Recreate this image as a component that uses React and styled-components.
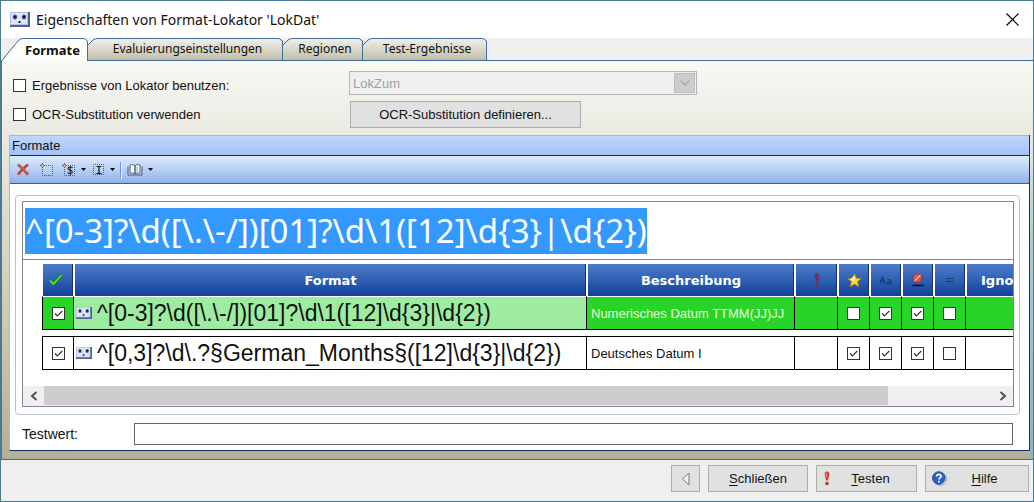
import React, { useState } from 'react';
import styled, { createGlobalStyle, css } from 'styled-components';

const GlobalStyle = createGlobalStyle`
  * {
    box-sizing: border-box;
  }

  body {
    margin: 0;
    font-family: 'Liberation Sans', Arial, sans-serif;
    font-size: 13px;
    color: #111;
  }

  button, input, select {
    font: inherit;
    color: inherit;
  }
`;

const Dialog = styled.div`
  display: flex;
  flex-direction: column;
  min-height: 100vh;
  background: #efefef;
  border: 1px solid #4a7b93;
`;

const TitleBar = styled.header`
  display: flex;
  align-items: center;
  gap: 6px;
  height: 37px;
  padding: 0 14px 0 9px;
  background: #fff;
`;

const Title = styled.h1`
  flex: 1;
  margin: 0;
  font-family: 'Noto Sans', sans-serif;
  font-size: 14px;
  font-weight: 400;
`;

const CloseButton = styled.button`
  display: flex;
  padding: 0;
  border: none;
  background: none;
`;

const TabBar = styled.div`
  display: flex;
  height: 23px;
  border-bottom: 1px solid #3f6b9c;
`;

const TabButton = styled.button`
  position: relative;
  width: ${(p) => p.$width}px;
  height: ${(p) => (p.$active ? 23 : 22)}px;
  padding: 0 0 0 ${(p) => (p.$active ? 16 : 4)}px;
  border: none;
  background: none;
  font-family: 'Noto Sans', sans-serif;
  font-size: ${(p) => (p.$active ? 13 : 12)}px;
  font-weight: ${(p) => (p.$active ? 700 : 400)};
  line-height: 22px;
  white-space: nowrap;
`;

const TabShape = styled.svg`
  position: absolute;
  inset: 0;
  width: 100%;
  height: 100%;
`;

const TabLabel = styled.span`
  position: relative;
`;

const Page = styled.main`
  flex: 1;
  display: flex;
  flex-direction: column;
  padding: 10px 3px 8px 7px;
  border-left: 1px solid #3c78b4;
  border-bottom: 1px solid #3c6f9c;
  background:
    linear-gradient(transparent 20%, #a5c8c8 55%, #8fb3b3) right / 3px 100% no-repeat,
    linear-gradient(#f9f8f3, #e9e8e0 20%, #d3d0bf 55%, #b3af9a);
`;

const Options = styled.div`
  display: grid;
  grid-template-columns: 336px 1fr;
  grid-template-rows: 28px 27px;
  row-gap: 2px;
  align-items: center;
  padding: 0 0 7px 4px;
`;

const CheckLabel = styled.label`
  display: flex;
  align-items: center;
  gap: 6px;
`;

const CheckBox = styled.input`
  appearance: none;
  flex: none;
  display: block;
  width: 13px;
  height: 13px;
  margin: 0;
  border: 1px solid #333;
  background: #fff;

  &:checked {
    background: #fff url("data:image/svg+xml,%3Csvg xmlns='http://www.w3.org/2000/svg' viewBox='0 0 11 11'%3E%3Cpath d='M2 5.5 4.3 8 9.3 3' fill='none' stroke='%23333' stroke-width='1.2'/%3E%3C/svg%3E");
  }
`;

const SelectBox = styled.div`
  display: grid;
  align-items: center;
  align-self: start;
  width: 348px;
  height: 24px;
  border: 1px solid #b4b4b4;
  background: #efefef;
`;

const Select = styled.select`
  grid-area: 1 / 1;
  appearance: none;
  height: 22px;
  padding: 0 3px;
  border: none;
  background: none;
  color: #a0a0a0;
  opacity: 1;
`;

const SelectArrow = styled.span`
  grid-area: 1 / 1;
  justify-self: end;
  display: flex;
  align-items: center;
  justify-content: center;
  width: 21px;
  height: 20px;
  margin-right: 1px;
  border: 1px solid #bdbdbd;
  background: #ccc;
  pointer-events: none;
`;

const Button = styled.button`
  display: flex;
  align-items: center;
  justify-content: center;
  width: ${(p) => p.$width}px;
  height: 27px;
  padding: 0 6px;
  border: 1px solid #adadad;
  background: #e1e1e1;
`;

const ButtonText = styled.span`
  flex: 1;
  text-align: center;

  &::first-letter {
    text-decoration: underline;
    text-underline-offset: 2px;
  }
`;

const DefineButton = styled(Button)`
  margin-left: 1px;
`;

const Group = styled.section`
  flex: 1;
  display: flex;
  flex-direction: column;
  min-width: 0;
  border-left: 1px solid #a9bccb;
  border-right: 1px solid #14306a;
  border-bottom: 1px solid #14306a;
  background: #fff;
`;

const GroupTitle = styled.h2`
  height: 21px;
  margin: 0;
  padding: 0 2px;
  border-top: 1px solid #a3b8cc;
  border-bottom: 1px solid #0a2f7c;
  background: linear-gradient(#c0d6fd, #a3c0f7);
  font-size: 13px;
  font-weight: 400;
  line-height: 19px;
`;

const Toolbar = styled.div`
  display: flex;
  align-items: center;
  height: 28px;
  padding: 0 6px;
  border-bottom: 1px solid #3a5c9c;
  background: linear-gradient(#dcebfe, #b9d0f5 50%, #8fb0e8);
`;

const ToolButton = styled.button`
  display: flex;
  align-items: center;
  gap: 5px;
  width: ${(p) => p.$width}px;
  padding: 0;
  border: none;
  background: none;
`;

const Separator = styled.span`
  width: 1px;
  height: 16px;
  margin: 0 6px 0 3px;
  background: #6f93c9;
  box-shadow: 1px 1px 0 #e7f0fd;
`;

const Frame = styled.div`
  display: flex;
  flex-direction: column;
  flex: 1;
  margin: 11px 9px 0 5px;
  padding: 5px 5px 7px 6px;
  border: 1px solid #b5c3cf;
  border-radius: 4px;
  min-width: 0;
`;

const Panel = styled.div`
  flex: 1;
  display: flex;
  flex-direction: column;
  min-width: 0;
  border: 1px solid #85858d;
`;

const ExpressionRow = styled.div`
  padding: 6px 2px 5px;
  border-bottom: 1px solid #85858d;
`;

const Expression = styled.mark`
  display: inline-block;
  vertical-align: top;
  background: #3399ff;
  color: #fff;
  font-family: 'Noto Sans', sans-serif;
  font-size: 33px;
  line-height: 46px;
  white-space: nowrap;
`;

const TableArea = styled.div`
  flex: 1;
  overflow: hidden;
  padding: 4px 0 0 19px;
`;

const Table = styled.table`
  table-layout: fixed;
  width: 100%;
  border-collapse: separate;
  border-spacing: 0;
`;

const Head = styled.th`
  width: ${(p) => (p.$width ? `${p.$width}px` : 'auto')};
  height: 32px;
  padding: 0;
  border-left: 1px solid #fff;
  border-right: 1px solid #fff;
  background: linear-gradient(#4c7bcb, #2f60b3 50%, #12409a);
  box-shadow: inset -1px 0 0 #12306e;
  color: #fff;
  font-family: 'DejaVu Sans', sans-serif;
  font-size: 13px;
  font-weight: 700;

  &:last-child {
    padding-left: 14px;
    border-right: none;
    box-shadow: none;
    text-align: left;
  }

  svg {
    display: block;
    margin: 0 auto;
  }
`;

const RowGroup = styled.tbody`
  & + &::before {
    content: '';
    display: table-row;
    height: 6px;
  }
`;

const cellFill = css`
  background: ${(p) => (p.$selected ? '#27d427' : '#fff')};
  color: ${(p) => (p.$selected ? '#eafcd8' : '#111')};
`;

const Cell = styled.td`
  height: 34px;
  padding: 0 4px;
  border-top: 1px solid ${(p) => (p.$selected ? '#fff' : '#000')};
  border-right: 1px solid #000;
  border-bottom: 1px solid #000;
  font-size: 13px;
  white-space: nowrap;
  ${cellFill}

  &:first-child {
    border-left: 1px solid #000;
  }

  &:last-child {
    border-right: none;
  }

  ${CheckBox} {
    margin: 0 auto;
  }
`;

const FormatCell = styled(Cell)`
  padding: 0 2px;
  background: ${(p) => (p.$selected ? '#9eeca2' : '#fff')};
  color: #111;
  font-size: 23px;
`;

const FormatText = styled.div`
  display: flex;
  align-items: center;
  gap: 5px;
`;

const ScrollBar = styled.div`
  display: flex;
  height: 20px;
  background: #f0f0f0;
`;

const ScrollButton = styled.button`
  display: flex;
  align-items: center;
  justify-content: center;
  width: 21px;
  padding: 0;
  border: none;
  background: none;
`;

const ScrollTrack = styled.div`
  flex: 1;
`;

const ScrollThumb = styled.div`
  width: 89%;
  height: 19px;
  background: #cdcdcd;
`;

const TestRow = styled.div`
  display: grid;
  grid-template-columns: 112px 1fr;
  align-items: center;
  padding: 8px 16px 5px 12px;
  font-size: 14px;
`;

const TestInput = styled.input`
  width: 100%;
  height: 22px;
  padding: 0 4px;
  border: 1px solid #646464;
  background: #fff;
`;

const Footer = styled.footer`
  display: flex;
  justify-content: flex-end;
  gap: 8px;
  padding: 5px 4px 9px;
`;

const FormatIcon = ({ width = 16, height = 12 }) => (
  <svg width={width} height={height} viewBox="0 0 20 15" aria-hidden="true">
    <rect width="20" height="15" fill="#4f5f90" />
    <rect width="18" height="13" fill="#b4c3e2" />
    <rect x="1" y="1" width="16" height="11" fill="#dfe7f7" />
    <path
      d="M5 2.500v5M3 3.800l4 2.400M7 3.800l-4 2.400M14 2.500v5M12 3.800l4 2.400M16 3.800l-4 2.400"
      stroke="#0b1450"
      strokeWidth="1.200"
    />
    <rect x="8.500" y="9" width="2" height="2" fill="#0b1450" />
  </svg>
);

const Caret = () => (
  <svg width="5" height="3" viewBox="0 0 5 3" aria-hidden="true">
    <path d="M0 0h5L2.500 3z" fill="#000" />
  </svg>
);

const Sparkle = () => (
  <>
    <path d="M2.500 0v5M0 2.500h5" stroke="#7b5a20" />
    <rect x="1" y="1" width="3" height="3" fill="#b8863a" />
    <rect x="2" y="2" width="1" height="1" fill="#ffe9a0" />
  </>
);

const DottedBox = ({ x, y, size }) => (
  <rect
    x={x + 0.5}
    y={y + 0.5}
    width={size}
    height={size}
    fill="none"
    stroke="#4c5870"
    strokeDasharray="1 1"
    strokeDashoffset=".5"
  />
);

const DeleteIcon = () => (
  <svg width="14" height="13" viewBox="0 0 14 13" aria-hidden="true">
    <path d="M2 1.500c3 2.500 6 5.500 10 10M12 1.500C8 4.500 4.500 8 2 11.500" fill="none" stroke="#b8463c" strokeWidth="2.800" />
    <path d="M2.500 1.500C5 4 8 6.500 11 10" fill="none" stroke="#dc8074" />
  </svg>
);

const NewIcon = () => (
  <svg width="14" height="14" viewBox="0 0 14 14" aria-hidden="true">
    <DottedBox x={2} y={2} size={10} />
    <Sparkle />
  </svg>
);

const NewVariableIcon = () => (
  <svg width="14" height="14" viewBox="0 0 14 14" aria-hidden="true">
    <DottedBox x={2} y={2} size={10} />
    <path
      d="M10.500 4.800C9.500 3.600 6 3.700 6 5.500c0 1.900 4.300 1.300 4.300 3.400 0 2-3.500 2-4.600.6M8.200 3v9.500"
      fill="none"
      stroke="#222"
      strokeWidth="1.100"
    />
    <Sparkle />
  </svg>
);

const InsertIcon = () => (
  <svg width="12" height="12" viewBox="0 0 12 12" aria-hidden="true">
    <DottedBox x={0} y={0} size={10} />
    <path d="M3.500 2.500h5M3.500 9.500h5M6 2.500v7" stroke="#111" strokeWidth="1.200" />
  </svg>
);

const BookIcon = () => (
  <svg width="16" height="12" viewBox="0 0 16 12" aria-hidden="true">
    <path d="M1 2.500v8.500h14V2.500" fill="#c9d8ea" stroke="#3f5878" />
    <path
      d="M3 1c2-.7 4-.3 5 .8v8.200C7 9 5 8.700 3 9.200zM13 1c-2-.7-4-.3-5 .8v8.200c1-1 3-1.300 5-.8z"
      fill="#fff"
      stroke="#4b6480"
    />
    <path d="M10 3v5" stroke="#8aa7b8" />
  </svg>
);

const CheckIcon = () => (
  <svg width="20" height="14" viewBox="0 0 20 14" aria-hidden="true">
    <path d="M2 7.500 5.500 11 13.500 2" fill="none" stroke="#157a1c" strokeWidth="3.600" />
    <path d="M2 7.500 5.500 11 13.500 2" fill="none" stroke="#5fdc55" strokeWidth="1.800" />
  </svg>
);

const ExclamationIcon = ({ muted }) => (
  <svg width="8" height="15" viewBox="0 0 8 15" aria-hidden="true">
    <path
      d="M4 .5C5.700.5 6.600 1.700 6.300 3.500L5 9.500H3L1.700 3.500C1.400 1.700 2.300.5 4 .5z"
      fill={muted ? '#6d3558' : '#d8402c'}
    />
    <circle cx="4" cy="12.500" r="1.800" fill={muted ? '#6d3558' : '#b03a2c'} />
    {!muted && <path d="M3.300 2v4" stroke="#f6a08c" />}
  </svg>
);

const StarIcon = () => (
  <svg width="15" height="15" viewBox="0 0 15 15" aria-hidden="true">
    <path
      d="M7.500 0.600l1.900 4.700 5 .3-3.900 3.200 1.300 5-4.300-2.800-4.300 2.800 1.300-5L.6 5.600l5-.3z"
      fill="#ffd83a"
      stroke="#b8791e"
      strokeWidth=".8"
    />
    <path d="M7.500 2.500v6L3 6.500z" fill="#fff6a0" />
  </svg>
);

const CaseIcon = () => (
  <svg width="14" height="9" viewBox="0 0 14 9" aria-hidden="true">
    <path
      d="M.8 8 3.500 1 6.200 8M2 5.500h3M8.500 4c1-.8 3.500-.8 3.500 1v3M12 5.600c-4-.3-4.500 2.200-2.700 2.200 1.500 0 2.700-.8 2.700-2"
      fill="none"
      stroke="#1d3768"
      strokeWidth="1.100"
    />
  </svg>
);

const BlockedIcon = () => (
  <svg width="14" height="14" viewBox="0 0 14 14" aria-hidden="true">
    <circle cx="6.500" cy="5" r="4.200" fill="#e2553e" stroke="#b83224" />
    <path d="M3.500 8 9.500 2" stroke="#f6b49c" strokeWidth="1.200" />
    <path d="M1 12.500h12" stroke="#0a1238" strokeWidth="1.600" />
  </svg>
);

const EqualsIcon = () => (
  <svg width="8" height="6" viewBox="0 0 8 6" aria-hidden="true">
    <path d="M0 1.500h8M0 4.500h8" stroke="#1d3768" />
  </svg>
);

const HelpIcon = () => (
  <svg width="15" height="15" viewBox="0 0 15 15" aria-hidden="true">
    <circle cx="8.300" cy="8" r="6.300" fill="#dfe8f2" stroke="#8296b0" strokeWidth=".8" />
    <circle cx="6.800" cy="7" r="6.300" fill="#2a62c4" stroke="#1b458e" strokeWidth=".8" />
    <path
      d="M4.600 5.400c0-2.900 4.600-2.700 4.400 0-.1 1.500-2.100 1.500-2.100 3.200M6.900 9.800v1.600"
      fill="none"
      stroke="#fff"
      strokeWidth="1.700"
    />
  </svg>
);

const Chevron = ({ left }) => (
  <svg width="8" height="10" viewBox="0 0 8 10" aria-hidden="true">
    <path d={left ? 'M6.500 1 2 5l4.500 4' : 'M1.500 1 6 5 1.500 9'} fill="none" stroke="#505050" strokeWidth="2" />
  </svg>
);

const TABS = [
  { label: 'Formate', width: 87 },
  { label: 'Evaluierungseinstellungen', width: 195 },
  { label: 'Regionen', width: 80 },
  { label: 'Test-Ergebnisse', width: 124 },
];

const Tab = ({ label, width, active, onClick }) => {
  const start = active ? 'M.5 23C3 20 5 18 7 15L17 3Q19 .5 22 .5' : 'M0 7L5 2Q7 .5 10 .5';
  const edge = `${start}H${width - 4}L${width - 0.5} 3V23`;

  return (
    <TabButton type="button" role="tab" aria-selected={active} $active={active} $width={width} onClick={onClick}>
      <TabShape viewBox={`0 0 ${width} ${active ? 23 : 22}`} aria-hidden="true">
        <defs>
          <linearGradient id="tab-fill" x2="0" y2="1">
            <stop stopColor="#f1f0ea" />
            <stop offset="1" stopColor="#bfbca6" />
          </linearGradient>
        </defs>
        <path
          d={active ? `${edge}H0Z` : `${edge}H0Z`}
          fill={active ? '#fdfdfb' : 'url(#tab-fill)'}
        />
        <path d={edge} fill="none" stroke="#3a6ea5" />
      </TabShape>
      <TabLabel>{label}</TabLabel>
    </TabButton>
  );
};

const COLUMNS = [
  { name: 'Aktiv', width: 32, icon: <CheckIcon /> },
  { name: 'Format', width: 513 },
  { name: 'Beschreibung', width: 208 },
  { name: 'Wichtig', width: 43, icon: <ExclamationIcon muted /> },
  { name: 'Bevorzugt', width: 32, icon: <StarIcon /> },
  { name: 'Schreibweise', width: 32, icon: <CaseIcon /> },
  { name: 'Gesperrt', width: 32, icon: <BlockedIcon /> },
  { name: 'Gleich', width: 32, icon: <EqualsIcon /> },
  { name: 'Igno' },
];

const FLAGS = ['Bevorzugt', 'Schreibweise', 'Gesperrt', 'Gleich'];

const ROWS = [
  {
    format: '^[0-3]?\\d([\\.\\-/])[01]?\\d\\1([12]\\d{3}|\\d{2})',
    description: 'Numerisches Datum TTMM(JJ)JJ',
    flags: [false, true, true, false],
  },
  {
    format: '^[0,3]?\\d\\.?§German_Months§([12]\\d{3}|\\d{2})',
    description: 'Deutsches Datum I',
    flags: [true, true, true, false],
  },
];

const App = () => {
  const [tab, setTab] = useState('Formate');
  const [selected, setSelected] = useState(0);
  const [testValue, setTestValue] = useState('');

  return (
    <>
      <GlobalStyle />
      <Dialog role="dialog" aria-labelledby="dialog-title">
        <TitleBar>
          <FormatIcon width={20} height={15} />
          <Title id="dialog-title">Eigenschaften von Format-Lokator 'LokDat'</Title>
          <CloseButton type="button" aria-label="Fenster schließen">
            <svg width="13" height="13" viewBox="0 0 13 13" aria-hidden="true">
              <path d="M.5.5l12 12M12.500.5l-12 12" stroke="#000" strokeWidth="1.200" />
            </svg>
          </CloseButton>
        </TitleBar>

        <TabBar role="tablist">
          {TABS.map((t) => (
            <Tab key={t.label} {...t} active={t.label === tab} onClick={() => setTab(t.label)} />
          ))}
        </TabBar>

        <Page>
          <Options>
            <CheckLabel>
              <CheckBox type="checkbox" />
              Ergebnisse von Lokator benutzen:
            </CheckLabel>
            <SelectBox>
              <Select disabled aria-label="Lokator">
                <option>LokZum</option>
              </Select>
              <SelectArrow>
                <svg width="10" height="6" viewBox="0 0 10 6" aria-hidden="true">
                  <path d="M.7.7 5 5 9.300.7" fill="none" stroke="#a0a0a0" strokeWidth="1.200" />
                </svg>
              </SelectArrow>
            </SelectBox>
            <CheckLabel>
              <CheckBox type="checkbox" />
              OCR-Substitution verwenden
            </CheckLabel>
            <DefineButton type="button" $width={231}>
              OCR-Substitution definieren...
            </DefineButton>
          </Options>

          <Group>
            <GroupTitle>Formate</GroupTitle>
            <Toolbar role="toolbar" aria-label="Formate">
              <ToolButton type="button" aria-label="Löschen" $width={24}><DeleteIcon /></ToolButton>
              <ToolButton type="button" aria-label="Neues Format" $width={22}><NewIcon /></ToolButton>
              <ToolButton type="button" aria-label="Neue Variable" $width={31}><NewVariableIcon /><Caret /></ToolButton>
              <ToolButton type="button" aria-label="Einfügen" $width={24}><InsertIcon /><Caret /></ToolButton>
              <Separator />
              <ToolButton type="button" aria-label="Wörterbuch" $width={26}><BookIcon /><Caret /></ToolButton>
            </Toolbar>

            <Frame>
              <Panel>
                <ExpressionRow>
                  <Expression>{ROWS[selected].format}</Expression>
                </ExpressionRow>
                <TableArea>
                  <Table>
                    <thead>
                      <tr>
                        {COLUMNS.map((c) => (
                          <Head key={c.name} scope="col" $width={c.width} aria-label={c.name}>
                            {c.icon || c.name}
                          </Head>
                        ))}
                      </tr>
                    </thead>
                    {ROWS.map((row, i) => {
                      const on = i === selected;
                      return (
                        <RowGroup key={row.format} onClick={() => setSelected(i)}>
                          <tr>
                            <Cell $selected={on}>
                              <CheckBox type="checkbox" defaultChecked aria-label="Aktiv" />
                            </Cell>
                            <FormatCell $selected={on}>
                              <FormatText>
                                <FormatIcon />
                                {row.format}
                              </FormatText>
                            </FormatCell>
                            <Cell $selected={on}>{row.description}</Cell>
                            <Cell $selected={on} />
                            {row.flags.map((flag, j) => (
                              <Cell key={FLAGS[j]} $selected={on}>
                                <CheckBox type="checkbox" defaultChecked={flag} aria-label={FLAGS[j]} />
                              </Cell>
                            ))}
                            <Cell $selected={on} />
                          </tr>
                        </RowGroup>
                      );
                    })}
                  </Table>
                </TableArea>
                <ScrollBar>
                  <ScrollButton type="button" aria-label="Nach links"><Chevron left /></ScrollButton>
                  <ScrollTrack><ScrollThumb /></ScrollTrack>
                  <ScrollButton type="button" aria-label="Nach rechts"><Chevron /></ScrollButton>
                </ScrollBar>
              </Panel>
            </Frame>

            <TestRow>
              <label htmlFor="test-value">Testwert:</label>
              <TestInput id="test-value" value={testValue} onChange={(e) => setTestValue(e.target.value)} />
            </TestRow>
          </Group>
        </Page>

        <Footer>
          <Button type="button" aria-label="Zurück" $width={29}>
            <svg width="9" height="14" viewBox="0 0 9 14" aria-hidden="true">
              <path d="M8 1v12L1.500 7z" fill="#f2f2f2" stroke="#777" />
            </svg>
          </Button>
          <Button type="button" $width={100}><ButtonText>Schließen</ButtonText></Button>
          <Button type="button" $width={101}><ExclamationIcon /><ButtonText>Testen</ButtonText></Button>
          <Button type="button" $width={104}><HelpIcon /><ButtonText>Hilfe</ButtonText></Button>
        </Footer>
      </Dialog>
    </>
  );
};

export default App;
